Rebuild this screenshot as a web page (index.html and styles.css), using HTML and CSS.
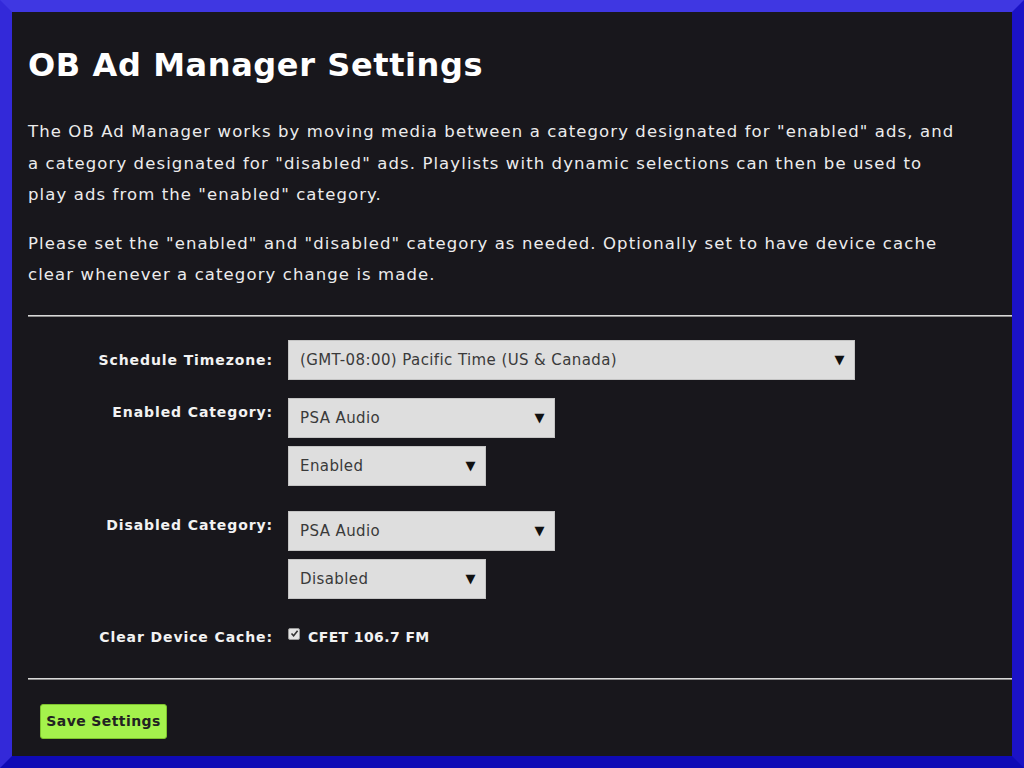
FILE: index.html
```html
<!DOCTYPE html>
<html>
<head>
<meta charset="utf-8">
<link rel="stylesheet" href="styles.css">
</head>
<body>
<div class="frame">
  <h1 class="title">OB Ad Manager Settings</h1>
  <p class="intro">The OB Ad Manager works by moving media between a category designated for "enabled" ads, and a category designated for "disabled" ads. Playlists with dynamic selections can then be used to play ads from the "enabled" category.</p>
  <p class="intro">Please set the "enabled" and "disabled" category as needed. Optionally set to have device cache clear whenever a category change is made.</p>
  <hr class="rule">
  <div class="form">
    <div class="row row-tz">
      <label class="label">Schedule Timezone:</label>
      <div class="fields">
        <div class="select sel-tz"><span>(GMT-08:00) Pacific Time (US &amp; Canada)</span></div>
      </div>
    </div>
    <div class="row">
      <label class="label">Enabled Category:</label>
      <div class="fields">
        <div class="select sel-cat"><span>PSA Audio</span></div>
        <div class="select sel-state"><span>Enabled</span></div>
      </div>
    </div>
    <div class="row">
      <label class="label">Disabled Category:</label>
      <div class="fields">
        <div class="select sel-cat"><span>PSA Audio</span></div>
        <div class="select sel-state"><span>Disabled</span></div>
      </div>
    </div>
    <div class="row row-cache">
      <label class="label">Clear Device Cache:</label>
      <div class="fields check-line">
        <span class="checkbox"><svg width="9" height="9" viewBox="0 0 9 9"><path d="M1.5 4.5 L3.6 6.8 L7.6 1.8" fill="none" stroke="#333" stroke-width="1.6"/></svg></span>
        <span class="check-text">CFET 106.7 FM</span>
      </div>
    </div>
  </div>
  <hr class="rule rule2">
  <button class="save">Save Settings</button>
</div>
</body>
</html>
```
FILE: styles.css
```css
html, body {
  margin: 0;
  padding: 0;
}
body {
  background: #18171c;
  font-family: "DejaVu Sans", Verdana, sans-serif;
}
.frame {
  box-sizing: border-box;
  width: 1024px;
  height: 768px;
  overflow: hidden;
  background: #18171c;
  border-style: solid;
  border-width: 12px;
  border-top-color: #3f37e2;
  border-left-color: #3329d9;
  border-right-color: #1b12c6;
  border-bottom-color: #0f0ab5;
  padding: 0 0 0 16px;
  color: #ececec;
}
.title {
  margin: 33px 0 0 0;
  font-size: 32px;
  line-height: 40px;
  font-weight: bold;
  color: #ffffff;
  letter-spacing: 0.6px;
}
.intro {
  width: 930px;
  margin: 31px 0 0 0;
  font-size: 16.5px;
  line-height: 31.5px;
  letter-spacing: 1.1px;
  color: #ececec;
}
.intro + .intro {
  margin-top: 17px;
}
.rule {
  margin: 24px 0 0 0;
  height: 0;
  border: 0;
  border-top: 1px solid #d8d8d8;
  border-bottom: 1px solid #8a8a8a;
}
.form {
  margin-top: 23px;
  display: flex;
  flex-direction: column;
  gap: 18px;
}
.row {
  display: grid;
  grid-template-columns: 245px auto;
  column-gap: 15px;
  align-items: start;
}
.label {
  text-align: right;
  font-weight: bold;
  font-size: 14px;
  letter-spacing: 0.9px;
  color: #f2f2f2;
  padding-top: 5px;
  line-height: 18px;
}
.row-tz .label {
  padding-top: 11px;
}
.fields {
  display: flex;
  flex-direction: column;
  gap: 8px;
  align-items: flex-start;
}
.row:nth-child(3) {
  margin-top: 7px;
}
.select {
  position: relative;
  box-sizing: border-box;
  height: 40px;
  background: #dedede;
  border: 1px solid #c4c4c4;
  color: #3a3a3a;
  font-size: 15px;
  letter-spacing: 0.4px;
  padding: 0 0 0 11px;
  display: flex;
  align-items: center;
}
.select::after {
  content: "\25BC";
  position: absolute;
  right: 9px;
  top: 11px;
  font-size: 13px;
  color: #111;
}
.sel-tz { width: 567px; }
.sel-cat { width: 267px; }
.sel-state { width: 198px; }
.row.row-cache {
  margin-top: 6px;
}
.check-line {
  flex-direction: row;
  align-items: center;
  gap: 8px;
  padding-top: 5px;
  line-height: 18px;
}
.checkbox {
  box-sizing: border-box;
  width: 12px;
  height: 12px;
  background: #e4e4e4;
  border: 1px solid #9a9a9a;
  border-radius: 2px;
  display: flex;
  align-items: center;
  justify-content: center;
  margin-top: -6px;
}
.check-text {
  font-size: 14px;
  font-weight: bold;
  color: #f2f2f2;
  letter-spacing: 0.4px;
}
.rule2 {
  margin-top: 32px;
}
.save {
  margin: 24px 0 0 12px;
  box-sizing: border-box;
  width: 127px;
  height: 35px;
  background: #a4f24c;
  border: 1px solid #7ec22e;
  border-radius: 3px;
  font-family: "DejaVu Sans", Verdana, sans-serif;
  font-weight: bold;
  font-size: 14px;
  letter-spacing: 0.4px;
  color: #222;
  padding: 0;
}
```
